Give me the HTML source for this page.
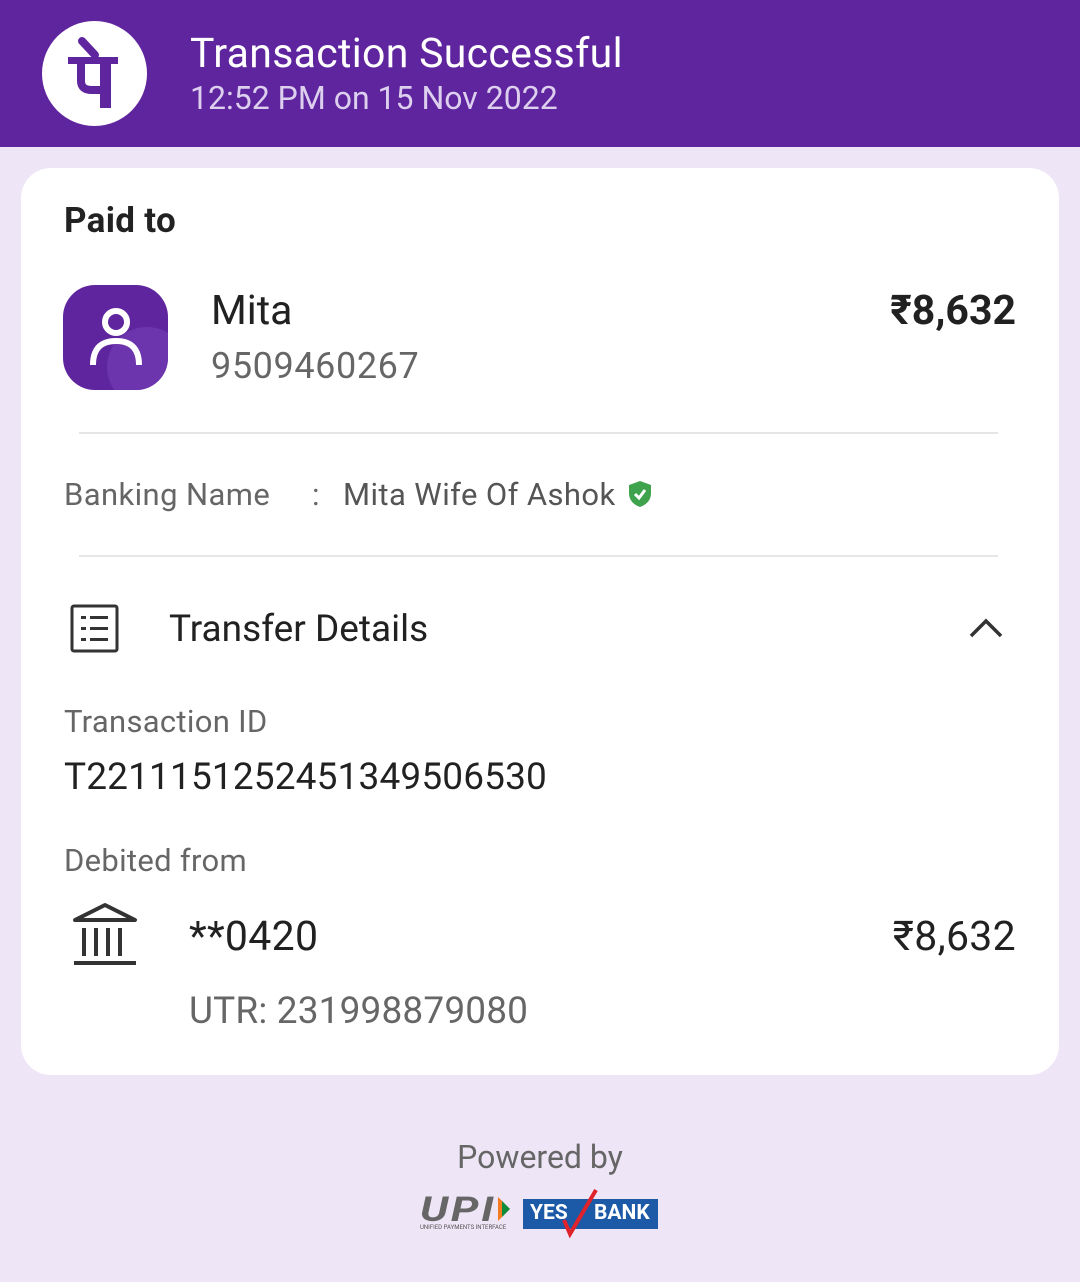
<!DOCTYPE html>
<html><head><meta charset="utf-8"><style>
body{margin:0;width:1080px;height:1282px;background:#eee5f6;font-family:"Roboto","Liberation Sans",sans-serif;position:relative;overflow:hidden;color:#212121}
.a{position:absolute;white-space:nowrap}
.hdr{position:absolute;left:0;top:0;width:1080px;height:147px;background:#5f259f}
.card{position:absolute;left:21px;top:168px;width:1038px;height:907px;background:#fff;border-radius:30px}
.hr{position:absolute;left:79px;width:919px;height:2px;background:#e6e6e6}
</style></head><body>
<div class="hdr"></div>
<div class="a" style="left:42px;top:21px;width:105px;height:105px;border-radius:50%;background:#fff"></div>
<svg class="a" style="left:42px;top:21px" width="105" height="105" viewBox="0 0 105 105">
<path d="M40 20 L53 34" stroke="#5f259f" stroke-width="8" stroke-linecap="round"/>
<rect x="26" y="36" width="50" height="7" fill="#5f259f"/>
<path d="M39 42 V60 Q39 69 50 69 H62" stroke="#5f259f" stroke-width="8" fill="none"/>
<rect x="58" y="40" width="11" height="47" fill="#5f259f"/>
</svg>
<div class="a" style="left:190px;top:30px;font-size:41px;color:#fff;letter-spacing:0.3px">Transaction Successful</div>
<div class="a" style="left:190px;top:79px;font-size:32px;color:#ddd0ee">12:52 PM on 15 Nov 2022</div>
<div class="card"></div>
<div class="a" style="left:64px;top:200px;font-size:35px;font-weight:bold;color:#222;letter-spacing:0.3px">Paid to</div>
<div class="a" style="left:63px;top:285px;width:105px;height:105px;border-radius:32px;background:#5f259f;overflow:hidden">
<div style="position:absolute;left:44px;top:42px;width:80px;height:80px;border-radius:50%;background:#6c35ad"></div>
<svg style="position:absolute;left:0;top:0" width="105" height="105"><circle cx="53" cy="37" r="11" stroke="#fff" stroke-width="6" fill="none"/><path d="M30 80 Q30 56 53 56 Q76 56 76 80" stroke="#fff" stroke-width="6" fill="none"/></svg></div>
<div class="a" style="left:211px;top:287px;font-size:41px">Mita</div>
<div class="a" style="left:211px;top:345px;font-size:36px;color:#666;letter-spacing:0.6px">9509460267</div>
<div class="a" style="right:64px;top:287px;font-size:41px;font-weight:bold">₹8,632</div>
<div class="hr" style="top:432px"></div>
<div class="a" style="left:64px;top:476px;font-size:31px;color:#666;letter-spacing:0.4px">Banking Name</div>
<div class="a" style="left:312px;top:476px;font-size:31px;color:#666">:</div>
<div class="a" style="left:343px;top:476px;font-size:31px;color:#555;letter-spacing:0.4px">Mita Wife Of Ashok</div>
<svg class="a" style="left:627px;top:480px" width="26" height="28" viewBox="0 0 26 28"><path d="M13 1 L24 5 V13 Q24 23 13 27 Q2 23 2 13 V5 Z" fill="#3fa34d"/><path d="M8 14 L12 18 L18 10" stroke="#fff" stroke-width="3" fill="none"/></svg>
<div class="hr" style="top:555px"></div>
<svg class="a" style="left:70px;top:604px" width="50" height="50" viewBox="0 0 50 50"><rect x="2" y="2" width="45" height="45" rx="2" stroke="#333" stroke-width="3" fill="none"/><g fill="#333"><rect x="11" y="12" width="5" height="3"/><rect x="11" y="23" width="5" height="3"/><rect x="11" y="34" width="5" height="3"/><rect x="20" y="12" width="18" height="3"/><rect x="20" y="23" width="18" height="3"/><rect x="20" y="34" width="18" height="3"/></g></svg>
<div class="a" style="left:169px;top:608px;font-size:37px">Transfer Details</div>
<svg class="a" style="left:968px;top:616px" width="36" height="24"><path d="M3 20 L18 5 L33 20" stroke="#333" stroke-width="3.5" fill="none"/></svg>
<div class="a" style="left:64px;top:703px;font-size:31px;color:#666;letter-spacing:0.3px">Transaction ID</div>
<div class="a" style="left:64px;top:756px;font-size:37px;letter-spacing:0.15px">T2211151252451349506530</div>
<div class="a" style="left:64px;top:842px;font-size:31px;color:#666;letter-spacing:0.3px">Debited from</div>
<svg class="a" style="left:72px;top:902px" width="66" height="66" viewBox="0 0 66 66"><path d="M3 18 L33 3 L63 18 Z" stroke="#333" stroke-width="4" fill="none" stroke-linejoin="round"/><g fill="#333"><rect x="10" y="26" width="4" height="28"/><rect x="22" y="26" width="4" height="28"/><rect x="34" y="26" width="4" height="28"/><rect x="46" y="26" width="4" height="28"/><rect x="2" y="59" width="62" height="4"/></g></svg>
<div class="a" style="left:189px;top:913px;font-size:41px;letter-spacing:0.3px">**0420</div>
<div class="a" style="right:64px;top:913px;font-size:41px;letter-spacing:0.3px">₹8,632</div>
<div class="a" style="left:189px;top:990px;font-size:37px;color:#666;letter-spacing:0.15px">UTR: 231998879080</div>
<div class="a" style="left:0;width:1080px;text-align:center;top:1138px;font-size:32px;color:#666">Powered by</div>
<div class="a" style="left:420px;top:1190px;font-size:34px;font-style:italic;font-weight:bold;color:#666;letter-spacing:2px;transform:scaleX(1.3);transform-origin:left">UPI</div>
<svg class="a" style="left:496px;top:1196px" width="16" height="26"><path d="M2 1 L14 13 L2 25 Z" fill="#f47b20"/><path d="M6 5 L14 13 L6 21Z" fill="#0f8c3c"/></svg>
<div class="a" style="left:420px;top:1224px;font-size:6px;color:#555">UNIFIED PAYMENTS INTERFACE</div>
<div class="a" style="left:523px;top:1199px;width:135px;height:30px;background:#1c5aa8"></div>
<div class="a" style="left:530px;top:1201px;font-size:21px;font-weight:bold;color:#fff">YES</div>
<div class="a" style="left:594px;top:1201px;font-size:21px;font-weight:bold;color:#fff">BANK</div>
<svg class="a" style="left:560px;top:1188px" width="40" height="50"><path d="M4 32 L10 46 L36 2" stroke="#e0222b" stroke-width="4" fill="none"/></svg>
</body></html>
